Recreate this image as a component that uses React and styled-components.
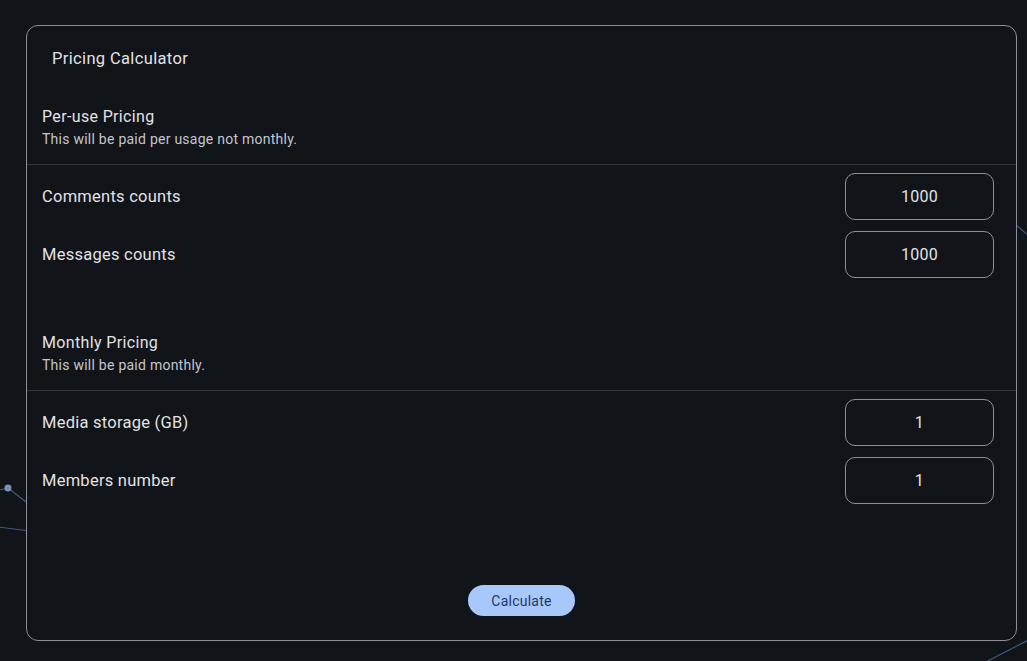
import React, { useState } from "react";
import styled, { createGlobalStyle } from "styled-components";

const GlobalStyle = createGlobalStyle`
  html, body {
    margin: 0;
    padding: 0;
    background: #111418;
    font-family: Roboto, "Noto Sans", "Liberation Sans", sans-serif;
    color: #e2e2e6;
  }
`;

const Page = styled.div`
  position: relative;
  height: 661px;
  box-sizing: border-box;
  padding: 25px 10px 20px 26px;
  overflow: hidden;
`;

const Backdrop = styled.svg`
  position: absolute;
  inset: 0;
  width: 100%;
  height: 100%;
  z-index: 0;
  pointer-events: none;
`;

const Card = styled.section`
  position: relative;
  z-index: 1;
  height: 100%;
  box-sizing: border-box;
  border: 1px solid #8e9099;
  border-radius: 12px;
  background: #111418;
  display: flex;
  flex-direction: column;
`;

const Title = styled.h1`
  margin: 0;
  padding: 21px 25px 0;
  font-size: 16.5px;
  line-height: 24px;
  font-weight: 400;
  letter-spacing: 0.35px;
`;

const Section = styled.div`
  margin-top: ${(p) => p.$top}px;
  display: flex;
  flex-direction: column;
`;

const SectionHead = styled.div`
  padding: 0 15px 15px;
  border-bottom: 1px solid #33363b;
`;

const SectionTitle = styled.h2`
  margin: 0;
  font-size: 16px;
  line-height: 24px;
  font-weight: 400;
  letter-spacing: 0.35px;
`;

const SectionSub = styled.p`
  margin: 0;
  font-size: 14px;
  line-height: 20px;
  color: #c4c6cf;
  letter-spacing: 0.25px;
`;

const Rows = styled.div`
  display: flex;
  flex-direction: column;
  gap: 11px;
  padding: 8px 22px 0 15px;
`;

const Row = styled.label`
  display: flex;
  align-items: center;
  justify-content: space-between;
  height: 47px;
  font-size: 16.5px;
  font-weight: 400;
  letter-spacing: 0.25px;
`;

const NumberInput = styled.input`
  width: 149px;
  height: 47px;
  box-sizing: border-box;
  border: 1px solid #8e9099;
  border-radius: 10px;
  background: transparent;
  color: #e2e2e6;
  font-family: inherit;
  font-size: 16px;
  font-weight: 400;
  letter-spacing: 0.3px;
  text-align: center;
  outline: none;
  -moz-appearance: textfield;
  &::-webkit-outer-spin-button,
  &::-webkit-inner-spin-button {
    -webkit-appearance: none;
    margin: 0;
  }
`;

const Footer = styled.div`
  margin-top: auto;
  padding-bottom: 24px;
  display: flex;
  justify-content: center;
`;

const Button = styled.button`
  width: 107px;
  height: 31px;
  border: none;
  border-radius: 16px;
  background: #a8c7fa;
  color: #1f3a66;
  font-family: inherit;
  font-size: 14px;
  font-weight: 400;
  letter-spacing: 0.25px;
  cursor: pointer;
`;

const sections = [
  {
    title: "Per-use Pricing",
    sub: "This will be paid per usage not monthly.",
    top: 34,
    fields: [
      { key: "comments", label: "Comments counts", value: 1000 },
      { key: "messages", label: "Messages counts", value: 1000 },
    ],
  },
  {
    title: "Monthly Pricing",
    sub: "This will be paid monthly.",
    top: 53,
    fields: [
      { key: "storage", label: "Media storage (GB)", value: 1 },
      { key: "members", label: "Members number", value: 1 },
    ],
  },
];

export default function App() {
  const [values, setValues] = useState(() => {
    const v = {};
    sections.forEach((s) => s.fields.forEach((f) => (v[f.key] = f.value)));
    return v;
  });

  return (
    <>
      <GlobalStyle />
      <Page>
        <Backdrop viewBox="0 0 1027 661" preserveAspectRatio="none">
          <g stroke="#4d6a9a" strokeWidth="1.2" fill="none" opacity="0.8">
            <line x1="-10" y1="492" x2="8" y2="488" />
            <line x1="8" y1="488" x2="30" y2="505" />
            <line x1="-10" y1="526" x2="30" y2="531" />
            <line x1="1010" y1="220" x2="1040" y2="245" />
            <line x1="980" y1="665" x2="1040" y2="634" />
          </g>
          <circle cx="8" cy="488" r="3.5" fill="#7d8fb3" />
        </Backdrop>
        <Card>
          <Title>Pricing Calculator</Title>
          {sections.map((s) => (
            <Section key={s.title} $top={s.top}>
              <SectionHead>
                <SectionTitle>{s.title}</SectionTitle>
                <SectionSub>{s.sub}</SectionSub>
              </SectionHead>
              <Rows>
                {s.fields.map((f) => (
                  <Row key={f.key}>
                    {f.label}
                    <NumberInput
                      type="number"
                      value={values[f.key]}
                      onChange={(e) => setValues({ ...values, [f.key]: e.target.value })}
                    />
                  </Row>
                ))}
              </Rows>
            </Section>
          ))}
          <Footer>
            <Button>Calculate</Button>
          </Footer>
        </Card>
      </Page>
    </>
  );
}
